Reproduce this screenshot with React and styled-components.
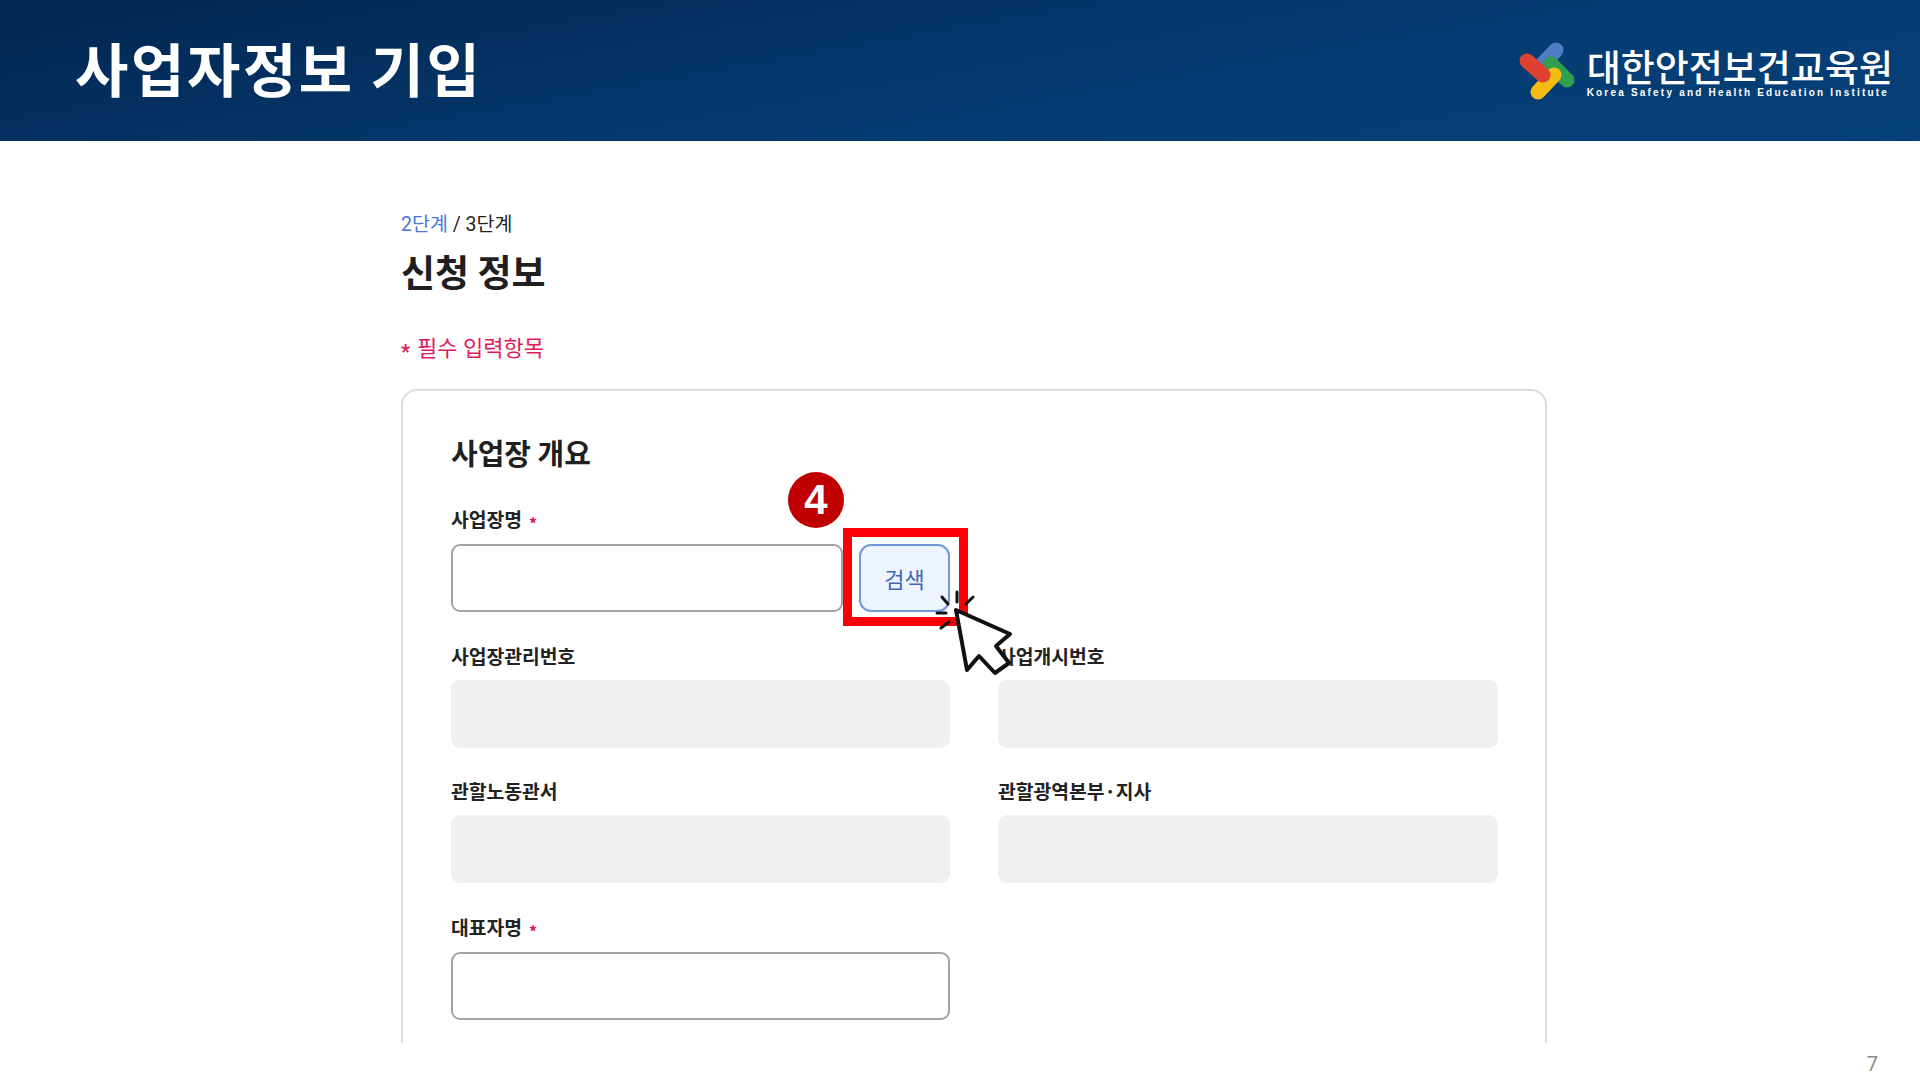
import React from 'react'
import styled, { createGlobalStyle } from 'styled-components'

const Global = createGlobalStyle`
  html, body { margin: 0; padding: 0; background: #fff; }
  body { font-family: Roboto, "Noto Sans CJK KR", sans-serif; color: #1f1f1f; }
`

const Slide = styled.div`
  width: 1920px;
  height: 1080px;
  overflow: hidden;
  display: flex;
  flex-direction: column;
  background: #fff;
`

const Header = styled.header`
  height: 141px;
  flex: none;
  display: flex;
  justify-content: space-between;
  align-items: center;
  padding: 0 27px 0 75px;
  background: linear-gradient(170deg, #02264f 0%, #043a70 55%, #064079 100%);
`

const PageTitle = styled.h1`
  margin: 0 0 8px;
  font-family: "Noto Sans CJK KR", sans-serif;
  font-size: 58px;
  font-weight: 700;
  letter-spacing: 2.6px;
  color: #fff;
`

const Logo = styled.div`
  display: flex;
  align-items: center;
  gap: 12px;
`

const LogoText = styled.div`
  display: flex;
  flex-direction: column;
  color: #fff;
  padding-top: 4px;
`

const LogoName = styled.span`
  font-family: "Noto Sans CJK KR", sans-serif;
  font-size: 37px;
  line-height: 40px;
  font-weight: 500;
`

const LogoSub = styled.span`
  font-family: "Liberation Sans", sans-serif;
  font-size: 10px;
  line-height: 13px;
  font-weight: 700;
  letter-spacing: 2.2px;
  white-space: nowrap;
`

const Main = styled.main`
  height: 902px;
  flex: none;
  overflow: hidden;
  padding: 69px 0 0 401px;
  box-sizing: border-box;
`

const Crumbs = styled.div`
  font-size: 19.5px;
  line-height: 30px;
`

const CrumbActive = styled.span`
  color: #4a78d8;
`

const Title = styled.h2`
  margin: 6px 0 0;
  font-family: "Noto Sans CJK KR", sans-serif;
  font-size: 37px;
  line-height: 50px;
  font-weight: 700;
`

const Required = styled.div`
  margin-top: 38px;
  display: flex;
  align-items: center;
  gap: 7px;
  font-size: 22px;
  line-height: 30px;
  color: #e0195a;
`

const RequiredStar = styled.span`
  font-size: 20px;
  font-weight: 700;
  position: relative;
  top: 3px;
`

const Card = styled.section`
  width: 1146px;
  box-sizing: border-box;
  margin-top: 25px;
  padding: 41px 48px 60px;
  border: 2px solid #dcdcdc;
  border-radius: 16px;
`

const CardTitle = styled.h3`
  margin: 0 0 35px;
  font-family: "Noto Sans CJK KR", sans-serif;
  font-size: 29px;
  line-height: 40px;
  font-weight: 700;
`

const Grid = styled.div`
  display: grid;
  grid-template-columns: 499px 500px;
  column-gap: 48px;
  row-gap: 31.5px;
`

const Field = styled.div`
  display: flex;
  flex-direction: column;
  gap: 12px;
`

const Label = styled.label`
  font-family: "Noto Sans CJK KR", sans-serif;
  font-size: 19.3px;
  line-height: 24px;
  font-weight: 700;
  color: #222;
`

const Star = styled.span`
  color: #e0195a;
  font-size: 16px;
  margin-left: 7px;
  position: relative;
  top: 3px;
`

const Input = styled.div`
  flex: ${p => (p.$grow ? 1 : 'none')};
  height: 68px;
  box-sizing: border-box;
  border-radius: 9px;
  border: ${p => (p.$disabled ? 'none' : '2px solid #a3a3a3')};
  background: ${p => (p.$disabled ? '#f0f0f0' : '#fff')};
`

const SearchRow = styled.div`
  position: relative;
  display: flex;
  gap: 16px;
`

const SearchButton = styled.button`
  width: 91px;
  height: 68px;
  padding: 0;
  border: 2px solid #6f98dc;
  border-radius: 12px;
  background: #eef4fd;
  color: #3f68b8;
  font-family: "Noto Sans CJK KR", sans-serif;
  font-size: 22px;
`

const Highlight = styled.div`
  position: absolute;
  left: 392px;
  top: -16px;
  width: 125px;
  height: 98px;
  box-sizing: border-box;
  border: 9px solid #fb0007;
`

const StepBadge = styled.div`
  position: absolute;
  left: 337px;
  top: -72px;
  width: 56px;
  height: 56px;
  border-radius: 50%;
  background: #c00000;
  color: #fff;
  display: flex;
  align-items: center;
  justify-content: center;
  font-family: "Liberation Sans", sans-serif;
  font-size: 42px;
  font-weight: 700;
`

const Cursor = styled.svg`
  position: absolute;
  left: 309px;
  top: -83px;
  z-index: 2;
  overflow: visible;
`

const Footer = styled.footer`
  flex: 1;
  display: flex;
  justify-content: flex-end;
  align-items: flex-end;
  padding: 0 42px 1px 0;
  font-size: 20px;
  line-height: 30px;
  color: #8a8a8a;
`

const LogoMark = () => (
  <svg width="56" height="58" viewBox="0 0 56 58">
    <line x1="37" y1="8" x2="20" y2="26" stroke="#4f7cc4" strokeWidth="15" strokeLinecap="round" />
    <line x1="48" y1="38" x2="32" y2="22" stroke="#2f9e4f" strokeWidth="15" strokeLinecap="round" />
    <line x1="19" y1="50" x2="35" y2="33" stroke="#f5bd12" strokeWidth="15" strokeLinecap="round" />
    <line x1="8" y1="19" x2="24" y2="33" stroke="#e0402f" strokeWidth="15" strokeLinecap="round" />
  </svg>
)

const ClickCursor = () => (
  <Cursor width="280" height="230" viewBox="0 0 280 230">
    <path
      d="M196 149 L250 173 L236 185 L249 202 L235 212 L219 195 L207 209 Z"
      fill="#fff"
      stroke="#111"
      strokeWidth="4"
      strokeLinejoin="round"
    />
    <g stroke="#111" strokeWidth="3" strokeLinecap="round">
      <line x1="197" y1="131" x2="197" y2="141" />
      <line x1="213" y1="136" x2="206" y2="143" />
      <line x1="182" y1="136" x2="188" y2="143" />
      <line x1="177" y1="152" x2="186" y2="152" />
      <line x1="181" y1="167" x2="189" y2="161" />
    </g>
  </Cursor>
)

export default function App() {
  return (
    <Slide>
      <Global />
      <Header>
        <PageTitle>사업자정보 기입</PageTitle>
        <Logo>
          <LogoMark />
          <LogoText>
            <LogoName>대한안전보건교육원</LogoName>
            <LogoSub>Korea Safety and Health Education Institute</LogoSub>
          </LogoText>
        </Logo>
      </Header>
      <Main>
        <Crumbs><CrumbActive>2단계</CrumbActive> / 3단계</Crumbs>
        <Title>신청 정보</Title>
        <Required><RequiredStar>*</RequiredStar>필수 입력항목</Required>
        <Card>
          <CardTitle>사업장 개요</CardTitle>
          <Grid>
            <Field>
              <Label>사업장명<Star>*</Star></Label>
              <SearchRow>
                <Input $grow />
                <SearchButton>검색</SearchButton>
                <Highlight />
                <StepBadge>4</StepBadge>
                <ClickCursor />
              </SearchRow>
            </Field>
            <div />
            <Field>
              <Label>사업장관리번호</Label>
              <Input $disabled />
            </Field>
            <Field>
              <Label>사업개시번호</Label>
              <Input $disabled />
            </Field>
            <Field>
              <Label>관할노동관서</Label>
              <Input $disabled />
            </Field>
            <Field>
              <Label>관할광역본부·지사</Label>
              <Input $disabled />
            </Field>
            <Field>
              <Label>대표자명<Star>*</Star></Label>
              <Input />
            </Field>
          </Grid>
        </Card>
      </Main>
      <Footer>7</Footer>
    </Slide>
  )
}
